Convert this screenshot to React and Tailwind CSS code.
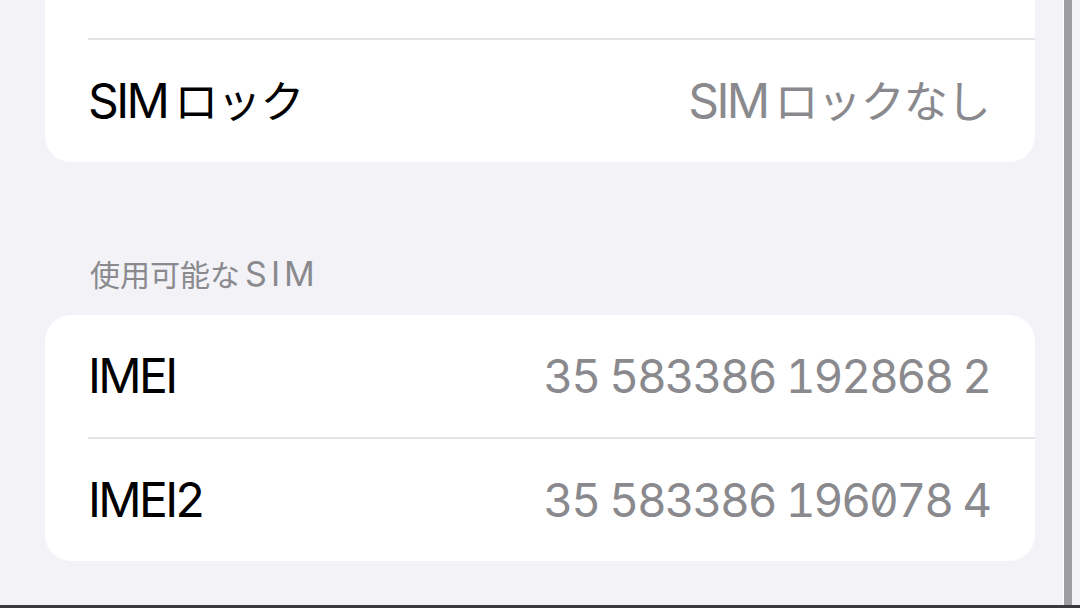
function Mixed({ latin, kana, className }) {
  return (
    <span className={"flex items-baseline " + className}>
      <span className="tracking-[-0.055em]">{latin}</span>
      <span className="ml-[7px] text-[44px] tracking-[-0.02em]">{kana}</span>
    </span>
  );
}

function Row({ label, value }) {
  return (
    <div className="flex h-[122px] items-center justify-between pl-[43px] pr-[45px] text-[48px]">
      {label}
      {value}
    </div>
  );
}

function Separator() {
  return <div className="ml-[43px] h-[2px] bg-[#e4e4e8]" />;
}

function Label({ children }) {
  return <span className="tracking-[-0.055em] text-black">{children}</span>;
}

function Number({ children }) {
  return (
    <span className="text-[46px] tabular-nums tracking-[-0.046em] text-[#8a8a8e] [font-feature-settings:'tnum','zero']">
      {children}
    </span>
  );
}

export default function App() {
  return (
    <div className="relative h-[608px] w-[1080px] overflow-hidden bg-[#f2f2f7] font-['Inter','Noto_Sans_CJK_JP',sans-serif] leading-none">
      <div className="flex flex-col px-[45px]">
        <div className="-mt-[84px] rounded-[26px] bg-white">
          <div className="h-[122px]" />
          <Separator />
          <Row
            label={<Mixed latin="SIM" kana="ロック" className="text-black" />}
            value={<Mixed latin="SIM" kana="ロックなし" className="text-[#8a8a8e]" />}
          />
        </div>

        <div className="flex items-baseline pl-[45px] pt-[95px] pb-[24px] text-[30px] text-[#8a8a8e]">
          <span>使用可能な</span>
          <span className="ml-[5px] text-[34px] tracking-[0.12em]">SIM</span>
        </div>

        <div className="rounded-[26px] bg-white">
          <Row label={<Label>IMEI</Label>} value={<Number>35 583386 192868 2</Number>} />
          <Separator />
          <Row label={<Label>IMEI2</Label>} value={<Number>35 583386 196078 4</Number>} />
        </div>
      </div>

      {/* scroll indicator */}
      <div className="absolute right-[8px] top-0 h-full w-[9px] border-l border-white bg-[#9e9ea2]" />
      <div className="absolute bottom-0 left-0 h-[3px] w-full bg-[#3a3a3c]" />
    </div>
  );
}
